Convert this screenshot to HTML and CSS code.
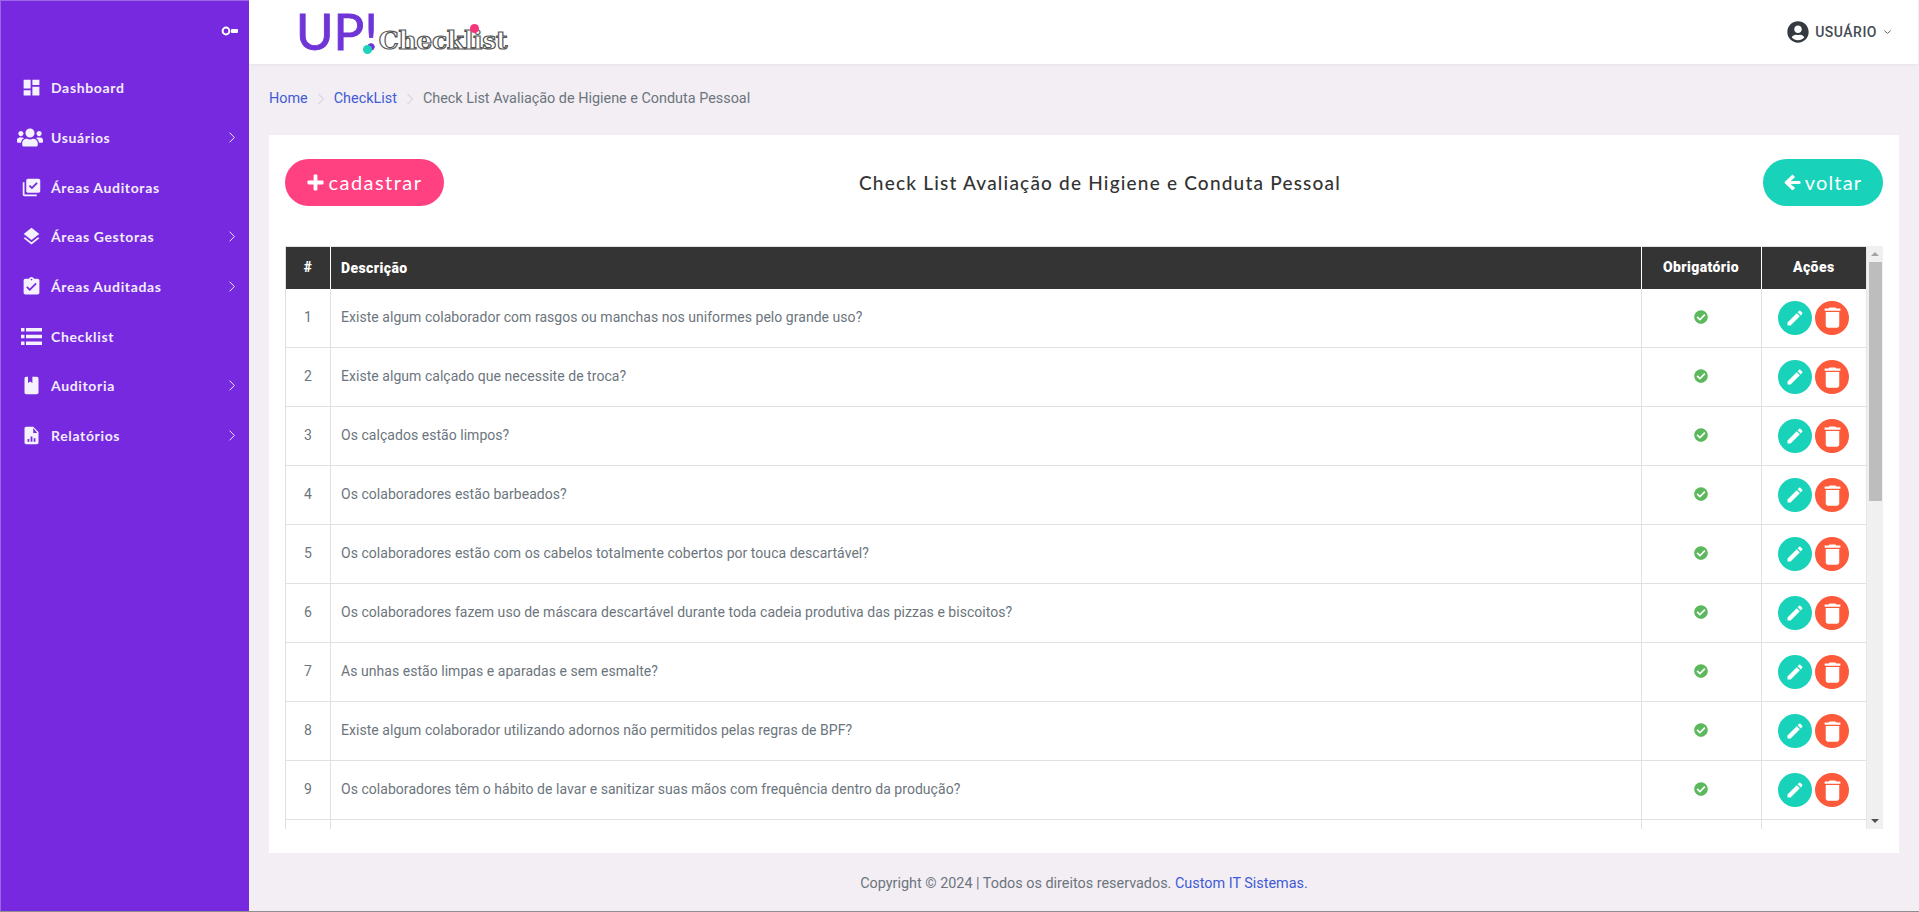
FILE: index.html
```html
<!DOCTYPE html>
<html lang="pt-BR">
<head>
<meta charset="utf-8">
<title>Check List</title>
<link rel="stylesheet" href="styles.css">
</head>
<body>
<svg class="sprite" aria-hidden="true">
  <symbol id="i-edit" viewBox="0 0 24 24"><path d="M3 17.25V21h3.75L17.81 9.94l-3.75-3.75L3 17.25zM20.71 7.04c.39-.39.39-1.02 0-1.41l-2.34-2.34c-.39-.39-1.02-.39-1.41 0l-1.83 1.83 3.75 3.75 1.83-1.83z"/></symbol>
  <symbol id="i-trash" viewBox="0 0 24 24"><path d="M6 19c0 1.1.9 2 2 2h8c1.1 0 2-.9 2-2V7H6v12zM19 4h-3.5l-1-1h-5l-1 1H5v2h14V4z"/></symbol>
  <symbol id="i-check" viewBox="0 0 512 512"><path d="M504 256c0 136.967-111.033 248-248 248S8 392.967 8 256 119.033 8 256 8s248 111.033 248 248zM227.314 387.314l184-184c6.248-6.248 6.248-16.379 0-22.627l-22.627-22.627c-6.248-6.249-16.379-6.249-22.628 0L216 308.118l-70.059-70.059c-6.248-6.248-16.379-6.248-22.628 0l-22.627 22.627c-6.248 6.248-6.248 16.379 0 22.627l104 104c6.249 6.25 16.379 6.25 22.628.001z"/></symbol>
  <symbol id="i-chev" viewBox="0 0 10 16"><path d="M2 2l6 6-6 6" fill="none" stroke="currentColor" stroke-width="1.2"/></symbol>
</svg>
<div class="page">
  <aside class="sidebar">
    <div class="side-top">
      <svg class="key" viewBox="0 0 18 10"><circle cx="5" cy="5" r="3.4" fill="none" stroke="#fff" stroke-width="2"/><rect x="10" y="3" width="7" height="4" rx="1" fill="#fff"/></svg>
    </div>
    <nav class="nav">
      <a class="nav-item"><span class="nav-ic"><svg class="ic-20" viewBox="0 0 24 24"><path d="M3 13h8V3H3v10zm0 8h8v-6H3v6zm10 0h8V11h-8v10zm0-18v6h8V3h-8z"/></svg></span><span class="nav-text">Dashboard</span></a>
      <a class="nav-item"><span class="nav-ic"><svg class="ic-users" viewBox="0 0 640 512"><path d="M96 224c35.3 0 64-28.7 64-64s-28.7-64-64-64-64 28.7-64 64 28.7 64 64 64zm448 0c35.3 0 64-28.7 64-64s-28.7-64-64-64-64 28.7-64 64 28.7 64 64 64zm32 32h-64c-17.6 0-33.5 7.1-45.1 18.6 40.3 22.1 68.9 62 75.1 109.4h66c17.7 0 32-14.3 32-32v-32c0-35.3-28.7-64-64-64zm-256 0c61.9 0 112-50.1 112-112S381.9 32 320 32 208 82.1 208 144s50.1 112 112 112zm76.8 32h-8.3c-20.8 10-43.9 16-68.5 16s-47.6-6-68.5-16h-8.3C179.6 288 128 339.6 128 403.2V432c0 26.5 21.5 48 48 48h288c26.5 0 48-21.5 48-48v-28.8c0-63.6-51.6-115.2-115.2-115.2zm-223.7-13.4C161.5 263.1 145.6 256 128 256H64c-35.3 0-64 28.7-64 64v32c0 17.7 14.3 32 32 32h65.9c6.3-47.4 34.9-87.3 75.2-109.4z"/></svg></span><span class="nav-text">Usuários</span><svg class="chev"><use href="#i-chev"/></svg></a>
      <a class="nav-item"><span class="nav-ic"><svg class="ic-20" viewBox="0 0 24 24"><path d="M20 2H8c-1.1 0-2 .9-2 2v12c0 1.1.9 2 2 2h12c1.1 0 2-.9 2-2V4c0-1.1-.9-2-2-2zm-7.53 12L9 10.5l1.41-1.41 2.06 2.06 5.18-5.18 1.41 1.41L12.47 14zM4 6H2v14c0 1.1.9 2 2 2h14v-2H4V6z"/></svg></span><span class="nav-text">Áreas Auditoras</span></a>
      <a class="nav-item"><span class="nav-ic"><svg class="ic-20" viewBox="0 0 24 24"><path d="M11.99 18.54l-7.37-5.73L3 14.07l9 7 9-7-1.63-1.27-7.38 5.74zM12 16l7.36-5.73L21 9l-9-7-9 7 1.63 1.27L12 16z"/></svg></span><span class="nav-text">Áreas Gestoras</span><svg class="chev"><use href="#i-chev"/></svg></a>
      <a class="nav-item"><span class="nav-ic"><svg class="ic-20" viewBox="0 0 24 24"><path d="M19 3h-4.18C14.4 1.84 13.3 1 12 1c-1.3 0-2.4.84-2.82 2H5c-1.1 0-2 .9-2 2v14c0 1.1.9 2 2 2h14c1.1 0 2-.9 2-2V5c0-1.1-.9-2-2-2zm-7 0c.55 0 1 .45 1 1s-.45 1-1 1-1-.45-1-1 .45-1 1-1zm-2 14l-4-4 1.41-1.41L10 14.17l6.59-6.59L18 9l-8 8z"/></svg></span><span class="nav-text">Áreas Auditadas</span><svg class="chev"><use href="#i-chev"/></svg></a>
      <a class="nav-item"><span class="nav-ic"><svg class="ic-list" viewBox="0 0 21 17"><path d="M0 0h3.500v3.500H0zM5 0h16v3.500H5zM0 6.700h3.500v3.500H0zM5 6.700h16v3.500H5zM0 13.400h3.500v3.500H0zM5 13.400h16v3.500H5z"/></svg></span><span class="nav-text">Checklist</span></a>
      <a class="nav-item"><span class="nav-ic"><svg class="ic-20" viewBox="0 0 24 24"><path d="M18 2H6c-1.100 0-2 .9-2 2v16c0 1.100.9 2 2 2h12c1.100 0 2-.9 2-2V4c0-1.100-.9-2-2-2zM8 2h5v7l-2.500-1.500L8 9V2z" fill-rule="evenodd"/></svg></span><span class="nav-text">Auditoria</span><svg class="chev"><use href="#i-chev"/></svg></a>
      <a class="nav-item"><span class="nav-ic"><svg class="ic-20" viewBox="0 0 24 24"><path d="M14 2H6c-1.100 0-2 .9-2 2v16c0 1.100.9 2 2 2h12c1.100 0 2-.9 2-2V8l-6-6zM9.500 19h-2v-3h2v3zm3.500 0h-2v-6h2v6zm3.500 0h-2v-4h2v4zM14 9V3.500L18.500 9H14z" fill-rule="evenodd"/></svg></span><span class="nav-text">Relatórios</span><svg class="chev"><use href="#i-chev"/></svg></a>
    </nav>
  </aside>
  <div class="main">
    <header class="topbar">
      <div class="logo">
        <span class="logo-up">UP!</span>
        <span class="logo-check">Checklist</span>
        <i class="dot dot-teal"></i>
        <i class="dot dot-pink"></i>
      </div>
      <div class="user">
        <svg class="user-ic" viewBox="0 0 496 512"><path d="M248 8C111 8 0 119 0 256s111 248 248 248 248-111 248-248S385 8 248 8zm0 96c48.600 0 88 39.400 88 88s-39.400 88-88 88-88-39.400-88-88 39.400-88 88-88zm0 344c-58.700 0-111.300-26.600-146.500-68.200 18.800-35.400 55.600-59.800 98.500-59.800 2.400 0 4.800.4 7.100 1.100 13 4.200 26.600 6.900 40.900 6.900 14.300 0 28-2.700 40.900-6.900 2.300-.7 4.700-1.100 7.100-1.100 42.900 0 79.700 24.400 98.500 59.800C359.300 421.400 306.700 448 248 448z"/></svg>
        <span class="user-name">USUÁRIO</span>
        <svg class="user-caret" viewBox="0 0 10 6"><path d="M1.500 1.500L5 4.500l3.500-3" fill="none" stroke="#666" stroke-width="1.100"/></svg>
      </div>
    </header>
    <main class="content">
      <ol class="crumbs">
        <li><a class="link">Home</a></li>
        <li class="sep"><svg viewBox="0 0 8 14"><path d="M1.500 2l5 5-5 5" fill="none" stroke="#c9cbd0" stroke-width="1"/></svg></li>
        <li><a class="link">CheckList</a></li>
        <li class="sep"><svg viewBox="0 0 8 14"><path d="M1.500 2l5 5-5 5" fill="none" stroke="#c9cbd0" stroke-width="1"/></svg></li>
        <li>Check List Avaliação de Higiene e Conduta Pessoal</li>
      </ol>
      <section class="card">
        <div class="card-head">
          <a class="pill pill-pink"><svg class="pill-ic" viewBox="0 0 18 18"><path d="M7 1.500a1 1 0 0 1 1-1h2a1 1 0 0 1 1 1V7h5.500a1 1 0 0 1 1 1v2a1 1 0 0 1-1 1H11v5.500a1 1 0 0 1-1 1H8a1 1 0 0 1-1-1V11H1.500a1 1 0 0 1-1-1V8a1 1 0 0 1 1-1H7z"/></svg>cadastrar</a>
          <h1 class="title">Check List Avaliação de Higiene e Conduta Pessoal</h1>
          <a class="pill pill-teal"><svg class="pill-ic" viewBox="0 0 18 18"><path d="M9.800 1.200l1.300 1.300c.5.500.5 1.100 0 1.600L7 7.300h9.300c.7 0 1.200.5 1.200 1.200v1c0 .7-.5 1.200-1.200 1.200H7l4.100 3.200c.5.500.5 1.100 0 1.600l-1.300 1.300c-.5.400-1.100.4-1.600 0L.9 9.800c-.5-.5-.5-1.100 0-1.600l7.300-7C8.700.8 9.300.8 9.800 1.200z"/></svg>voltar</a>
        </div>
        <div class="table-wrap">
          <div class="table-view">
          <table class="grid">
            <thead>
              <tr><th class="c-num">#</th><th class="c-desc">Descrição</th><th class="c-req">Obrigatório</th><th class="c-act">Ações</th></tr>
            </thead>
            <tbody>
              <tr><td class="c-num">1</td><td>Existe algum colaborador com rasgos ou manchas nos uniformes pelo grande uso?</td><td class="c-req"><svg class="ok"><use href="#i-check"/></svg></td><td class="c-act"><div class="acts"><a class="round teal"><svg><use href="#i-edit"/></svg></a><a class="round red"><svg><use href="#i-trash"/></svg></a></div></td></tr>
              <tr><td class="c-num">2</td><td>Existe algum calçado que necessite de troca?</td><td class="c-req"><svg class="ok"><use href="#i-check"/></svg></td><td class="c-act"><div class="acts"><a class="round teal"><svg><use href="#i-edit"/></svg></a><a class="round red"><svg><use href="#i-trash"/></svg></a></div></td></tr>
              <tr><td class="c-num">3</td><td>Os calçados estão limpos?</td><td class="c-req"><svg class="ok"><use href="#i-check"/></svg></td><td class="c-act"><div class="acts"><a class="round teal"><svg><use href="#i-edit"/></svg></a><a class="round red"><svg><use href="#i-trash"/></svg></a></div></td></tr>
              <tr><td class="c-num">4</td><td>Os colaboradores estão barbeados?</td><td class="c-req"><svg class="ok"><use href="#i-check"/></svg></td><td class="c-act"><div class="acts"><a class="round teal"><svg><use href="#i-edit"/></svg></a><a class="round red"><svg><use href="#i-trash"/></svg></a></div></td></tr>
              <tr><td class="c-num">5</td><td>Os colaboradores estão com os cabelos totalmente cobertos por touca descartável?</td><td class="c-req"><svg class="ok"><use href="#i-check"/></svg></td><td class="c-act"><div class="acts"><a class="round teal"><svg><use href="#i-edit"/></svg></a><a class="round red"><svg><use href="#i-trash"/></svg></a></div></td></tr>
              <tr><td class="c-num">6</td><td>Os colaboradores fazem uso de máscara descartável durante toda cadeia produtiva das pizzas e biscoitos?</td><td class="c-req"><svg class="ok"><use href="#i-check"/></svg></td><td class="c-act"><div class="acts"><a class="round teal"><svg><use href="#i-edit"/></svg></a><a class="round red"><svg><use href="#i-trash"/></svg></a></div></td></tr>
              <tr><td class="c-num">7</td><td>As unhas estão limpas e aparadas e sem esmalte?</td><td class="c-req"><svg class="ok"><use href="#i-check"/></svg></td><td class="c-act"><div class="acts"><a class="round teal"><svg><use href="#i-edit"/></svg></a><a class="round red"><svg><use href="#i-trash"/></svg></a></div></td></tr>
              <tr><td class="c-num">8</td><td>Existe algum colaborador utilizando adornos não permitidos pelas regras de BPF?</td><td class="c-req"><svg class="ok"><use href="#i-check"/></svg></td><td class="c-act"><div class="acts"><a class="round teal"><svg><use href="#i-edit"/></svg></a><a class="round red"><svg><use href="#i-trash"/></svg></a></div></td></tr>
              <tr><td class="c-num">9</td><td>Os colaboradores têm o hábito de lavar e sanitizar suas mãos com frequência dentro da produção?</td><td class="c-req"><svg class="ok"><use href="#i-check"/></svg></td><td class="c-act"><div class="acts"><a class="round teal"><svg><use href="#i-edit"/></svg></a><a class="round red"><svg><use href="#i-trash"/></svg></a></div></td></tr>
              <tr><td class="c-num"></td><td></td><td class="c-req"></td><td class="c-act"></td></tr>
            </tbody>
          </table>
          </div>
          <div class="scrollbar" aria-hidden="true">
            <span class="bar-btn"><i class="arrow-up"></i></span>
            <span class="bar-thumb"></span>
            <span class="bar-track"></span>
            <span class="bar-btn"><i class="arrow-down"></i></span>
          </div>
        </div>
      </section>
      <footer class="foot">Copyright © 2024 | Todos os direitos reservados.&nbsp;<a class="link">Custom IT Sistemas.</a></footer>
    </main>
  </div>
</div>
</body>
</html>
```

FILE: styles.css
```css
* { box-sizing: border-box; }
html, body { margin: 0; height: 100%; overflow: hidden; }
body { font-family: Roboto, "Liberation Sans", sans-serif; font-size: 14.4px; color: #6c757d; background: #f3eef4; }
.sprite { display: none; }
.page { display: flex; height: 912px; border-bottom: 1px solid #8e8e8e; }

.sidebar { width: 249px; flex: none; background: #7629df; color: #f3ecfd; border-left: 1px solid #9a66e6; border-top: 1px solid #9a66e6; }
.side-top { height: 62px; display: flex; align-items: center; justify-content: flex-end; padding-right: 10px; }
.key { width: 18px; height: 10px; margin-top: -2px; }
.nav { display: flex; flex-direction: column; }
.nav-item { height: 49.65px; display: flex; align-items: center; padding-right: 13px; }
.nav-ic { width: 50px; flex: none; display: flex; justify-content: center; padding-left: 10px; padding-right: 0; }
.nav-ic svg { fill: #f6f1fe; }
.ic-20 { width: 21px; height: 21px; }
.ic-users { width: 26px; height: 21px; margin-left: -2px; }
.ic-list { width: 21px; height: 17px; }
.nav-text { flex: 1; font-family: Lato, sans-serif; font-weight: 700; font-size: 14px; letter-spacing: .65px; }
.chev { width: 8px; height: 13px; color: #f3ecfd; }

.main { flex: 1; min-width: 0; display: flex; flex-direction: column; }
.topbar { height: 64px; flex: none; background: #fff; border-right: 1px solid #f3eef4; box-shadow: 0 1px 3px rgba(0,0,0,.05); display: flex; align-items: center; justify-content: space-between; padding: 0 26px 0 47px; }
.logo { position: relative; display: flex; align-items: flex-end; height: 54px; padding-bottom: 3px; }
.logo-up { font-family: Lato, sans-serif; font-size: 51px; line-height: 50px; color: #6f35d6; -webkit-text-stroke: .9px #6f35d6; }
.logo-check { font-family: "DejaVu Serif", serif; font-weight: 700; font-size: 25px; line-height: 28px; color: #fff; -webkit-text-stroke: 1.2px #555; margin-left: 1px; margin-bottom: 1px; letter-spacing: -.3px; }
.dot { position: absolute; width: 9px; height: 9px; border-radius: 50%; }
.dot-teal { background: #1ed3b8; left: 67px; top: 40px; }
.dot-pink { background: #f5357b; left: 174px; top: 19px; }
.user { display: flex; align-items: center; gap: 6px; color: #444b52; }
.user-ic { width: 22px; height: 22px; fill: #343a40; }
.user-name { font-weight: 500; font-size: 14px; letter-spacing: .5px; }
.user-caret { width: 9px; height: 6px; }

.content { flex: 1; min-height: 0; display: flex; flex-direction: column; padding: 0 20px; }
.crumbs { list-style: none; margin: 0; padding: 0 0 2px; height: 71px; flex: none; display: flex; align-items: center; gap: 8px; }
.sep svg { display: block; width: 8px; height: 14px; margin: 0 1px; }
.link { color: #3f5bd5; }

.card { height: 718px; flex: none; background: #fff; padding: 24px 16px; display: flex; flex-direction: column; }
.card-head { height: 87px; flex: none; display: flex; justify-content: space-between; align-items: flex-start; }
.pill { height: 47px; border-radius: 24px; display: flex; align-items: center; justify-content: center; gap: 4px; color: #fff; font-family: Lato, sans-serif; font-size: 20px; letter-spacing: 1.2px; padding-bottom: 2px; }
.pill-ic { width: 17px; height: 17px; fill: #fff; margin-top: 2px; }
.pill-pink { width: 159px; gap: 5px; letter-spacing: 1.45px; background: #ff4081; }
.pill-teal { width: 120px; background: #18d2ba; }
.title { margin: 8px 0 0; font-family: Lato, sans-serif; font-weight: 500; font-size: 19px; line-height: 32px; letter-spacing: 1.2px; color: #333; padding-right: 7px; }

.table-wrap { height: 583px; flex: none; display: flex; }
.table-view { flex: 1; min-width: 0; overflow: hidden; }
.scrollbar { width: 17px; flex: none; display: flex; flex-direction: column; background: #f0f0f0; border-left: 1px solid #e6e6e6; }
.bar-btn { height: 16px; flex: none; display: flex; align-items: center; justify-content: center; }
.arrow-up { border: 4px solid transparent; border-top: 0; border-bottom: 4px solid #a3a3a3; }
.arrow-down { border: 4px solid transparent; border-bottom: 0; border-top: 4px solid #505050; }
.bar-thumb { height: 239px; flex: none; margin: 0 1.5px; background: #bdbdbd; }
.bar-track { flex: 1; }

.grid { width: 100%; border-collapse: collapse; table-layout: fixed; font-size: 14px; letter-spacing: .04px; }
.grid th { height: 42px; background: #343434; color: #fff; font-weight: 900; font-size: 14px; letter-spacing: .4px; text-align: left; padding: 0 10px; border: 1px solid #fff; border-width: 0 1px; border-top: 1px solid #e0e0e0; }
.grid th:first-child { border-left-color: #e0e0e0; }
.grid th:last-child { border-right: 0; }
.grid td { height: 59px; padding: 0 10px 2px; border: 1px solid #e0e0e0; border-top: 0; vertical-align: middle; }
.grid td:last-child { border-right: 0; }
.grid .c-num { width: 45px; padding-left: 0; padding-right: 0; text-align: center; }
.grid .c-req { width: 120px; padding-left: 0; padding-right: 0; text-align: center; }
.grid .c-act { width: 105px; padding: 0; text-align: center; }
.grid th.c-num, .grid th.c-req, .grid th.c-act { padding-bottom: 1px; }
.ok { display: block; width: 14px; height: 14px; fill: #5cb85c; margin: 0 auto; }
.acts { display: flex; justify-content: center; gap: 3px; }
.round { width: 34px; height: 34px; border-radius: 50%; display: flex; align-items: center; justify-content: center; }
.round svg { width: 20px; height: 20px; fill: #fff; }
.round.red svg { width: 27px; height: 27px; }
.teal { background: #18d2ba; }
.red { background: #fc5a3a; }
.foot { flex: 1; display: flex; align-items: center; justify-content: center; padding-top: 3px; }
```
